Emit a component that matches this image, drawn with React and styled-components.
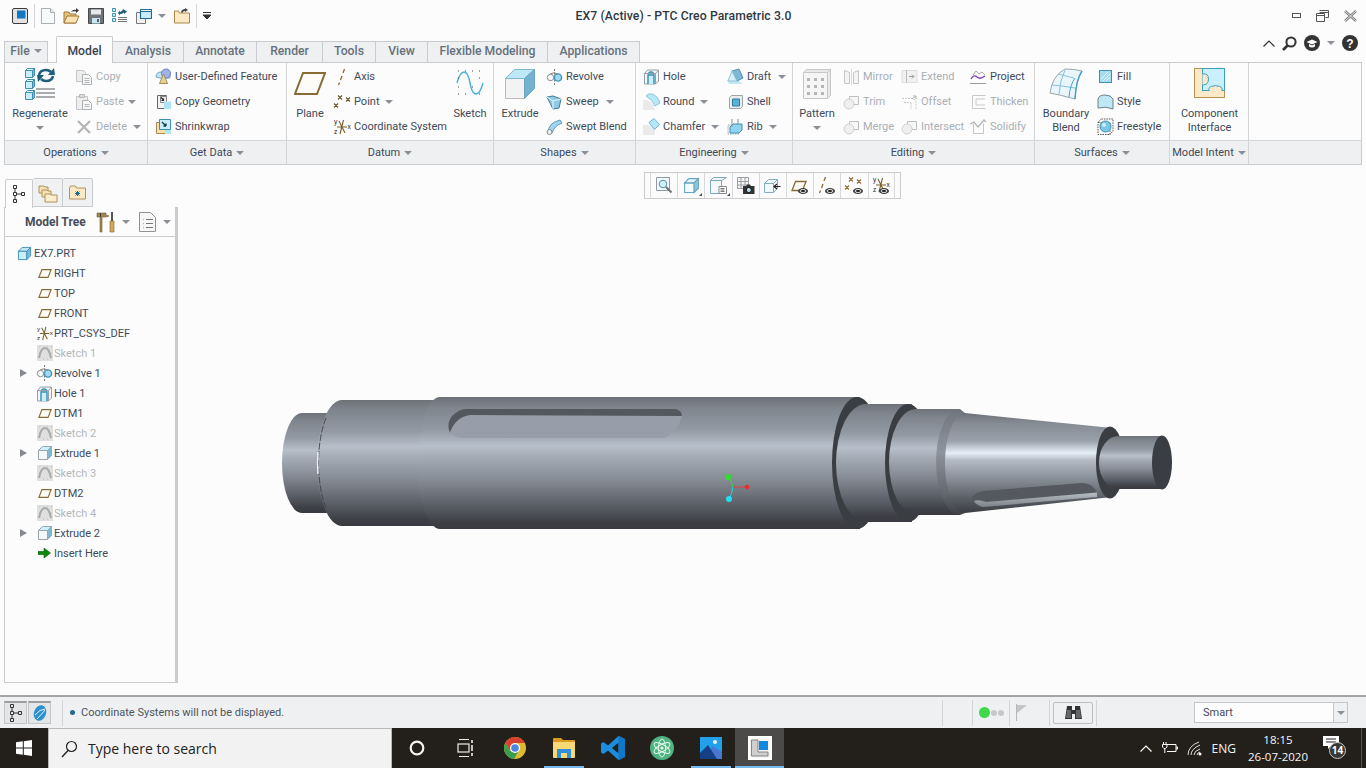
import React from 'react';
import styled, { createGlobalStyle } from 'styled-components';

const GlobalStyles = createGlobalStyle`
  html, body { margin: 0; padding: 0; background: #fcfcfc; }
  #root { width: 1366px; height: 768px; overflow: hidden; }
  * { box-sizing: border-box; }
`;

const Page = styled.div`
  width: 1366px;
  height: 768px;
  display: flex;
  flex-direction: column;
  background: #fcfcfc;
  font-family: Roboto, "Liberation Sans", sans-serif;
  font-size: 11px;
  color: #3e4a58;
  overflow: hidden;
`;

/* title bar */
const TitleBar = styled.div`
  height: 40px;
  position: relative;
  display: flex;
  align-items: center;
  padding: 0 9px 9px 12px;
`;
const QuickTools = styled.div`
  display: flex;
  align-items: center;
  gap: 8px;
`;
const QatSep = styled.div`
  width: 1px;
  height: 24px;
  background: #d4d6d8;
  margin: 0 -2px;
`;
const Title = styled.div`
  flex: 1;
  text-align: center;
  font-weight: 500;
  font-size: 12.200px;
  color: #2f3844;
  margin-left: -136px;
  letter-spacing: 0.1px;
`;
const WindowBtns = styled.div`
  display: flex;
  align-items: center;
  gap: 15px;
`;

/* tabs */
const TabRow = styled.div`
  height: 22px;
  display: flex;
  align-items: flex-end;
  padding-left: 4px;
  position: relative;
  z-index: 2;
`;
const Tab = styled.div`
  width: ${p => p.$w}px;
  height: ${p => (p.$active ? 27 : 21)}px;
  margin-right: ${p => p.$gap || 0}px;
  margin-bottom: ${p => (p.$active ? -1 : 0)}px;
  display: flex;
  align-items: center;
  justify-content: center;
  gap: 4px;
  padding-bottom: ${p => (p.$active ? 0 : 3)}px;
  padding-top: ${p => (p.$active ? 2 : 0)}px;
  background: ${p => (p.$active ? '#fcfcfc' : '#eef0f2')};
  border: 1px solid #c9cbcd;
  border-left-width: ${p => (p.$active || p.$first ? 1 : 0)}px;
  border-bottom: ${p => (p.$active ? 'none' : '0')};
  border-radius: ${p => (p.$active ? '2px 2px 0 0' : '0')};
  font-size: 12.200px;
  font-weight: 500;
  color: ${p => (p.$active ? '#3b4450' : '#66707c')};
`;
const HelpTools = styled.div`
  margin-left: auto;
  margin-right: 8px;
  align-self: flex-start;
  margin-top: -5px;
  display: flex;
  align-items: center;
  gap: 7px;
`;

/* ribbon */
const Ribbon = styled.div`
  margin: 0 4px;
  height: 103px;
  border: 1px solid #c9cbcd;
  display: flex;
`;
const Group = styled.div`
  width: ${p => p.$w}px;
  flex: ${p => (p.$fill ? 1 : 'none')};
  display: flex;
  flex-direction: column;
  border-right: ${p => (p.$fill ? 0 : '1px solid #d2d4d6')};
`;
const GroupBody = styled.div`
  height: 77px;
  display: flex;
  padding-left: ${p => p.$pl || 0}px;
  gap: ${p => p.$gap || 0}px;
`;
const GroupLabel = styled.div`
  height: 24px;
  display: flex;
  align-items: center;
  justify-content: center;
  gap: 4px;
  background: #eff0f2;
  border-top: 1px solid #d2d4d6;
  white-space: nowrap;
`;
const LargeBtn = styled.div`
  width: ${p => p.$w}px;
  flex: none;
  display: flex;
  flex-direction: column;
  align-items: center;
  padding-top: 5px;
  color: ${p => (p.$off ? '#a8aeb4' : 'inherit')};
`;
const LargeIcon = styled.div`
  height: 39px;
  display: flex;
  align-items: flex-start;
`;
const LargeLabel = styled.div`
  line-height: 14px;
  text-align: center;
  white-space: nowrap;
`;
const SmallCol = styled.div`
  width: ${p => p.$w}px;
  flex: none;
  display: flex;
  flex-direction: column;
  padding-top: 1px;
`;
const SmallBtn = styled.div`
  height: 25px;
  display: flex;
  align-items: center;
  gap: 3px;
  white-space: nowrap;
  color: ${p => (p.$off ? '#a9afb5' : 'inherit')};
`;
const Caret = styled.span`
  display: inline-block;
  width: 0;
  height: 0;
  flex: none;
  margin-left: ${p => p.$ml || 0}px;
  margin-top: ${p => p.$mt || 0}px;
  border-left: 4px solid transparent;
  border-right: 4px solid transparent;
  border-top: 4px solid ${p => p.$color || '#8b9097'};
`;

/* work area */
const Workspace = styled.div`
  flex: 1;
  display: flex;
  position: relative;
  min-height: 0;
`;
const Sidebar = styled.div`
  width: 174px;
  margin: 13px 0 12px 4px;
  display: flex;
  flex-direction: column;
`;
const SideTabs = styled.div`
  height: 29px;
  display: flex;
  align-items: flex-end;
  padding-left: 1px;
`;
const SideTab = styled.div`
  width: ${p => p.$w}px;
  height: 29px;
  display: flex;
  align-items: center;
  justify-content: center;
  border: 1px solid #c9cbcd;
  border-left-width: ${p => (p.$active ? 1 : 0)}px;
  border-bottom: ${p => (p.$active ? 0 : 1)}px solid #c9cbcd;
  border-radius: 2px 2px 0 0;
  background: ${p => (p.$active ? '#fcfcfc' : '#f0f1f3')};
  margin-bottom: ${p => (p.$active ? -1 : 0)}px;
  position: relative;
`;
const TreePanel = styled.div`
  flex: 1;
  border: 1px solid #c9cbcd;
  border-top: 0;
  border-right: 3px solid #c9cbcd;
  display: flex;
  flex-direction: column;
`;
const TreeHeader = styled.div`
  height: 30px;
  border-bottom: 1px solid #c9cbcd;
  display: flex;
  align-items: center;
  padding-left: 20px;
  font-weight: 700;
  font-size: 12px;
  color: #474d58;
`;
const HeaderIcon = styled.span`
  margin-left: ${p => p.$ml}px;
  display: flex;
`;
const TreeList = styled.div`
  padding-top: 6px;
`;
const TreeRow = styled.div`
  height: 20px;
  display: flex;
  align-items: center;
  padding-left: ${p => (p.$root ? 10 : 15)}px;
  color: ${p => (p.$off ? '#b3b7bc' : 'inherit')};
  font-size: 11px;
  white-space: nowrap;
`;
const Arrow = styled.span`
  width: 15px;
  flex: none;
  visibility: ${p => (p.$show ? 'visible' : 'hidden')};
  &::before {
    content: '';
    display: block;
    width: 0;
    height: 0;
    border-top: 4.500px solid transparent;
    border-bottom: 4.500px solid transparent;
    border-left: 7px solid #858a90;
  }
`;
const TreeIcon = styled.span`
  width: ${p => p.$w || 19}px;
  height: 16px;
  flex: none;
  display: flex;
  align-items: center;
  justify-content: center;
`;
const Canvas = styled.div`
  flex: 1;
  position: relative;
`;
const ModelArt = styled.svg`
  position: absolute;
  left: 0;
  top: 0;
  width: 1188px;
  height: 530px;
`;
const GraphicsBar = styled.div`
  position: absolute;
  left: 466px;
  top: 7px;
  height: 27px;
  display: flex;
  background: #fbfbfc;
  border: 1px solid #c9cbcd;
  padding: 0 5px;
  z-index: 1;
`;
const GraphicsBtn = styled.div`
  width: 27.200px;
  height: 25px;
  display: flex;
  align-items: ${p => (p.$pt ? 'flex-start' : 'center')};
  justify-content: ${p => (p.$pt ? 'flex-start' : 'center')};
  padding: ${p => p.$pt || 0}px 0 0 ${p => p.$pl || 0}px;
  border-left: 1px solid #d6d8da;
  position: relative;
  &:last-child { border-right: 1px solid #d6d8da; }
`;

/* status bar */
const StatusBar = styled.div`
  height: 33px;
  border-top: 2px solid #a4a4a4;
  background: #eef0f2;
  display: flex;
  align-items: center;
  padding-left: 4px;
  font-size: 11px;
  color: #4c5560;
`;
const StatusBtn = styled.div`
  width: 23px;
  height: 23px;
  margin-right: 1px;
  display: flex;
  align-items: center;
  justify-content: center;
  background: #e3e5e7;
  border: 1px solid #c4c6c8;
  border-top: 2px solid #9b9da0;
`;
const StatusSep = styled.div`
  width: 1px;
  height: 26px;
  background: #d2d4d6;
  margin: ${p => p.$m || '0'};
`;
const Bullet = styled.span`
  width: 5px;
  height: 5px;
  border-radius: 50%;
  background: #1f6a8c;
  margin: 0 6px 0 7px;
`;
const StatusRight = styled.div`
  margin-left: auto;
  display: flex;
  align-items: center;
`;
const Lamp = styled.span`
  width: ${p => p.$size}px;
  height: ${p => p.$size}px;
  border-radius: 50%;
  background: ${p => p.$color};
  margin: 0 1px 0 ${p => p.$ml || 0}px;
`;
const FindBtn = styled.div`
  width: 40px;
  height: 22px;
  margin-left: 3px;
  border: 1px solid #bcbec1;
  border-radius: 2px;
  background: #eff0f2;
  display: flex;
  align-items: center;
  justify-content: center;
`;
const SmartSelect = styled.div`
  width: 154px;
  height: 21px;
  margin: 0 18px 0 97px;
  display: flex;
  border: 1px solid #c4c6c8;
  background: #fdfdfd;
  font-size: 11px;
  color: #444c56;
`;
const SmartText = styled.div`
  flex: 1;
  padding-left: 8px;
  line-height: 20px;
`;
const SmartArrow = styled.div`
  width: 14px;
  border-left: 1px solid #c4c6c8;
  background: #eef0f2;
  display: flex;
  align-items: center;
  justify-content: center;
`;

/* windows taskbar */
const Taskbar = styled.div`
  height: 40px;
  background: #23201c;
  display: flex;
  align-items: stretch;
  font-family: "Open Sans", "Noto Sans", sans-serif;
  color: #f4f4f4;
`;
const StartBtn = styled.div`
  width: 48px;
  display: flex;
  align-items: center;
  justify-content: center;
`;
const SearchBox = styled.div`
  width: 344px;
  background: #f2f2f2;
  border: 1px solid #b8b8b8;
  border-width: 1px 1px 0 1px;
  display: flex;
  align-items: center;
  padding-left: 12px;
  gap: 10px;
  color: #222;
  font-size: 14px;
`;
const AppSlot = styled.div`
  width: 49px;
  display: flex;
  align-items: center;
  justify-content: center;
  background: ${p => (p.$active ? '#4b4a48' : 'transparent')};
  position: relative;
  &::after {
    content: '';
    display: ${p => (p.$open ? 'block' : 'none')};
    position: absolute;
    left: ${p => (p.$active ? 0 : 5)}px;
    right: ${p => (p.$active ? 0 : 4)}px;
    bottom: 0;
    height: 2px;
    background: #76b9ed;
  }
`;
const Tray = styled.div`
  margin-left: auto;
  display: flex;
  align-items: center;
  border-right: 1px solid #55524e;
  margin-right: 4px;
  padding-right: 14px;
`;
const TrayItem = styled.div`
  margin-left: ${p => p.$ml || 0}px;
  display: flex;
  align-items: center;
  font-size: ${p => p.$fs || 12}px;
`;
const Clock = styled.div`
  margin-left: 11px;
  width: 62px;
  text-align: center;
  font-size: 11.500px;
  line-height: 17px;
`;
const NoteBadge = styled.div`
  position: absolute;
  left: 6px;
  top: 6px;
  width: 17px;
  height: 17px;
  border-radius: 50%;
  background: #3a3835;
  border: 1px solid #c8c8c8;
  font-size: 10px;
  font-weight: 700;
  line-height: 15px;
  text-align: center;
  color: #fff;
`;
const NoteWrap = styled.div`
  position: relative;
  width: 24px;
  height: 24px;
  margin-left: 14px;
`;

/* ---------- icons ---------- */
const Ico = styled.svg`
  display: block;
  flex: none;
`;
const Svg = ({ w = 16, h = 16, vb, children }) => (
  <Ico width={w} height={h} viewBox={vb || `0 0 ${w} ${h}`} fill="none">{children}</Ico>
);

const BROWN = '#8a6b35';
const BLUE = '#3f93b8';

const Cube = ({ s = 16, front = '#f5f6f7', top = '#cdeefb', side = '#7db9d6', line = '#9aa6ad' }) => (
  <Svg w={s} h={s} vb="0 0 16 16">
    <path d="M1.500 5.500h9v9h-9z" fill={front} stroke={line} />
    <path d="M1.500 5.500l4-4h9l-4 4z" fill={top} stroke={line} />
    <path d="M10.500 5.500l4-4v9l-4 4z" fill={side} stroke={line} />
  </Svg>
);
const PlaneIco = ({ w = 16, h = 12, c = BROWN, sw = 1.300 }) => (
  <Svg w={w} h={h} vb="0 0 16 12"><path d="M4.500 1.500h10.500L11.500 10.500H1z" stroke={c} strokeWidth={sw} fill="#fdfcf8" /></Svg>
);
const CsysIco = ({ s = 18 }) => (
  <Svg w={s} h={s} vb="0 0 18 18">
    <path d="M4 9h10M10.500 2L7 16M6 3l6 12" stroke="#7a5f2c" strokeWidth="1.100" />
    <text x="1" y="6" fontSize="6.500" fill="#222" fontFamily="Liberation Sans">y</text>
    <text x="14.500" y="11" fontSize="6.500" fill="#222" fontFamily="Liberation Sans">x</text>
    <text x="1" y="16" fontSize="6.500" fill="#222" fontFamily="Liberation Sans">z</text>
  </Svg>
);
const SketchIco = () => (
  <Svg w={16} h={16}>
    <rect width="16" height="16" fill="#dfe0df" />
    <path d="M2 13q2-10 6-10t6 10" stroke="#a5aba9" strokeWidth="2" />
    <path d="M2 2h.5M6 2h.5M10 2h.5M14 2h.5M2 8h.5M14 8h.5M6 14h.5M10 14h.5" stroke="#999" />
  </Svg>
);
const RevolveIco = () => (
  <Svg w={18} h={16}>
    <path d="M8.500 0v16" stroke="#777" strokeDasharray="2 1.500" />
    <circle cx="4.500" cy="8.500" r="3.200" stroke="#888" fill="#fff" />
    <circle cx="12" cy="8.500" r="3.600" stroke={BLUE} strokeWidth="1.400" fill="#9fdaf2" />
    <path d="M4 5q4-2.500 8 0" stroke="#888" />
  </Svg>
);
const HoleIco = () => (
  <Svg w={17} h={17}>
    <path d="M1.500 5.500L4.500 2h11v11l-3 3h-11z" fill="#f4f5f6" stroke="#96a0a6" />
    <path d="M5 16V8Q5 4 8 4t3 4v8M5 7h6" stroke={BLUE} strokeWidth="1.500" fill="#c9eefb" />
    <path d="M12.500 16V5.500L15.500 2M12.500 5.500h-11" stroke="#96a0a6" />
  </Svg>
);
const ArrowInsert = () => (
  <Svg w={14} h={12}><path d="M0 4.500h6V1l6.500 5L6 11V7.500H0z" fill="#0d8a0d" stroke="#0a5a0a" strokeWidth=".6" /></Svg>
);
const CopyIco = () => (
  <Svg w={18} h={16}>
    <path d="M1.500 1.500h7l2 2v9h-9z" fill="#eceded" stroke="#c3c5c7" />
    <path d="M7.500 5.500h6l3 3v7h-9z" fill="#f6f6f6" stroke="#aeb1b4" />
    <path d="M9.500 9.500h5M9.500 11.500h5M9.500 13.500h5" stroke="#b5b8bb" />
  </Svg>
);
const PasteIco = () => (
  <Svg w={18} h={18}>
    <path d="M1.500 3.500h11v13h-11z" fill="#eeeeee" stroke="#c3c5c7" />
    <path d="M4.500 1.500h5v3h-5z" fill="#dadada" stroke="#b7b9bb" />
    <path d="M7.500 7.500h6l3 3v6h-9z" fill="#f6f6f6" stroke="#aeb1b4" />
    <path d="M9.500 11.500h5M9.500 13.500h5" stroke="#b5b8bb" />
  </Svg>
);
const DeleteIco = () => (
  <Svg w={16} h={16}><path d="M2 2l12 12M14 2L2 14" stroke="#b3b5b7" strokeWidth="2.200" /></Svg>
);
const RegenerateIco = () => (
  <Svg w={32} h={32}>
    <path d="M1.500 2.500h7v7h-7zM1.500 13.500h7v7h-7zM1.500 24.500h7v7h-7z" fill="#c9eefb" stroke="#3f8fb0" />
    <path d="M1.500 2.500l2-2h7l-2 2zM1.500 13.500l2-2h7l-2 2zM1.500 24.500l2-2h7l-2 2z" fill="#e9f8fd" stroke="#3f8fb0" />
    <path d="M8.500 2.500l2-2v7l-2 2zM8.500 13.500l2-2v7l-2 2zM8.500 24.500l2-2v7l-2 2z" fill="#7db9d6" stroke="#3f8fb0" />
    <path d="M12 21h19M12 25h19M12 29h19" stroke="#8e9296" strokeWidth="1.500" />
    <path d="M15 7q1-5 7-5 3 0 5 2" stroke="#1d5d7e" strokeWidth="2.600" />
    <path d="M29 8q-1 5-7 5-3 0-5-2" stroke="#1d5d7e" strokeWidth="2.600" />
    <path d="M24 7h7l-1-7zM20 7h-7l1 7z" fill="#1d5d7e" />
  </Svg>
);
const UdfIco = () => (
  <Svg w={17} h={17}>
    <path d="M1 9q0-5 5-5h9v6H5z" fill="#bfe5f5" stroke="#6fa9c5" />
    <circle cx="11" cy="5.500" r="4.500" fill="#9fb3e8" stroke="#6f80b8" />
    <path d="M8.500 6L4.500 15.500h8z" fill="#e8cf9c" stroke="#a98c52" />
  </Svg>
);
const CopyGeomIco = () => (
  <Svg w={17} h={17}>
    <path d="M2.500 2.500h9v13h-9z" fill="#f3f3f3" stroke="#666" />
    <path d="M5.500 3.500h6v6h-6z" fill="#eee" stroke="#888" />
    <path d="M6 4.500l3 3M8.500 7.500v-2M8.500 7.500h-2" stroke="#222" strokeWidth="1.200" />
    <path d="M9 8.500h7v7.500H9z" fill="#aee4f7" />
  </Svg>
);
const ShrinkIco = () => (
  <Svg w={17} h={17}>
    <path d="M1.500 4.500h10v11h-10z" fill="#f6dfae" stroke="#a88a50" />
    <path d="M4.500 1.500h11v10h-11z" fill="#c9eefb" stroke="#3f8fb0" />
    <path d="M7 4l4 4M11 8V5.500M11 8H8.500" stroke="#14394c" strokeWidth="1.300" />
    <path d="M10 12h6v4h-6z" fill="#aee4f7" />
  </Svg>
);
const AxisIco = () => (
  <Svg w={14} h={18}><path d="M9.500 1L8 5M7 8L5.500 12M4.500 14.500L3.500 17" stroke={BROWN} strokeWidth="1.300" /></Svg>
);
const PointIco = ({ eye }) => (
  <Svg w={18} h={15}>
    <path d="M5 1.500l4 4M9 1.500l-4 4M13 3.500l4 4M17 3.500l-4 4M1 9.500l4 4M5 9.500l-4 4" stroke={eye ? BROWN : '#6b5526'} strokeWidth="1.100" />
  </Svg>
);
const SketchLarge = () => (
  <Svg w={30} h={30}>
    <path d="M2 15q3-11 7-11t6 11 6 11 7-11" stroke="#45b1dc" strokeWidth="1.400" />
    <path d="M3 3h1M10 3h1M17 3h1M24 3h1M3 10h1M24 10h1M3 19h1M17 19h1M3 26h1M10 26h1M24 26h1" stroke="#444" />
  </Svg>
);
const ExtrudeLarge = () => (
  <Svg w={32} h={32}>
    <path d="M1.500 10.500h19v20h-19z" fill="#f3f3f3" stroke="#b9bcbf" />
    <path d="M1.500 10.500l9-9h20l-10 9z" fill="#bfe8f7" stroke="#7fb8d2" />
    <path d="M20.500 10.500l10-9v19l-10 10z" fill="#74b3d0" stroke="#6aa4c1" />
  </Svg>
);
const SweepIco = () => (
  <Svg w={17} h={17}>
    <path d="M1 4l6-1 8 3-2 9-6 1-3-6z" fill="#8fcbe5" stroke="#3b7c9b" />
    <path d="M1 4l6 4 8-2M7 8l0 8" stroke="#eaf7fc" />
  </Svg>
);
const SweptIco = () => (
  <Svg w={17} h={17}>
    <path d="M2 15Q2 5 14 2l2 3Q8 8 6 15z" fill="#9ed6ee" stroke="#5b9ab8" />
    <circle cx="3.500" cy="14" r="2.500" fill="#eee" stroke="#888" />
  </Svg>
);
const RoundIco = () => (
  <Svg w={17} h={17}>
    <path d="M0 7h3q7 1 9 10H0z" fill="#eaeaea" />
    <path d="M3 3q2-3 6-2 6 2 8 9l-5 3Q10 7 3 3z" fill="#b9e7f8" stroke="#8cc4dc" />
  </Svg>
);
const ChamferIco = () => (
  <Svg w={17} h={17}>
    <path d="M0 7h6l6 5v5H0z" fill="#eaeaea" />
    <path d="M6 4.500L11 .5l5.500 6-5 5z" fill="#b7e6f8" stroke="#6fb4d0" />
  </Svg>
);
const DraftIco = () => (
  <Svg w={17} h={17}>
    <path d="M0 12h10l6 4H2z" fill="#bfe8f7" />
    <path d="M5 3l7-2 4 9-6 3z" fill="#7db9d6" stroke="#4f8faf" />
    <path d="M5 3l5 10H1z" fill="#d6f0fa" stroke="#8cc4dc" />
  </Svg>
);
const ShellIco = () => (
  <Svg w={16} h={16}>
    <path d="M1.500 3.500l2-2h11v11l-2 2h-11z" fill="#ebecec" stroke="#9aa6ad" />
    <path d="M4.500 5h7v7h-7z" fill="#5cb0d8" stroke="#2f7aa0" />
  </Svg>
);
const RibIco = () => (
  <Svg w={17} h={17}>
    <path d="M1 7h11v9H1z" fill="#f1f1f1" stroke="#9aa6ad" strokeDasharray="1.500 1" />
    <path d="M3 9l3-3h9v6l-3 3H3z" fill="#8fd4f2" stroke="#3f8fb0" />
    <path d="M5 1v8M11 1v5" stroke="#8a9094" />
  </Svg>
);
const PatternLarge = () => (
  <Svg w={30} h={32}>
    <path d="M1.500 4.500h24v26h-24z" fill="#f5f5f5" stroke="#c5c7c9" />
    <path d="M1.500 4.500l3-3h24l-3 3zM25.500 4.500l3-3v26l-3 3z" fill="#e9e9e9" stroke="#c5c7c9" />
    <path d="M5 10h3v3H5zM12 10h3v3h-3zM19 10h3v3h-3zM5 17h3v3H5zM12 17h3v3h-3zM19 17h3v3h-3zM5 24h3v3H5zM12 24h3v3h-3zM19 24h3v3h-3z" fill="#b4b7ba" />
  </Svg>
);
const GreyStroke = '#c4c6c8';
const MirrorIco = () => (
  <Svg w={17} h={16}>
    <path d="M1.500 1.500l5 2v11h-5zM15.500 1.500l-5 2v11h5z" stroke={GreyStroke} fill="#f4f4f4" />
    <path d="M8.500 0v16" stroke="#d7d8d9" />
  </Svg>
);
const TrimIco = () => (
  <Svg w={17} h={17}>
    <path d="M6.500 3.500h9v8h-9z" stroke="#bcbec0" fill="#f7f7f7" />
    <circle cx="6" cy="11" r="5" stroke="#cfd1d2" fill="#efefef" />
  </Svg>
);
const ExtendIco = () => (
  <Svg w={17} h={15}>
    <path d="M1 1.500h15v12H1z" fill="#f1f1f1" stroke="#dcdddd" />
    <path d="M5.500 1.500v12" stroke="#b9bbbd" />
    <path d="M8 7.500h5M11 5.500l2 2-2 2" stroke="#9c9ea0" />
  </Svg>
);
const OffsetIco = () => (
  <Svg w={17} h={16}>
    <path d="M1 4.500h11l3 2v9" stroke="#c8cacc" strokeDasharray="2 1" />
    <path d="M3 8.500h7M10 8.500v7" stroke="#c8cacc" strokeDasharray="2 1" />
    <path d="M11 5l4-3M15 2v3M15 2h-3" stroke="#aeb0b2" />
  </Svg>
);
const ProjectIco = () => (
  <Svg w={17} h={16}>
    <path d="M0 14.500h16" stroke="#9a9c9e" />
    <path d="M1 10q3-5 6-2t8-1" stroke="#7f3fb0" strokeWidth="1.300" />
    <path d="M3 6l3-4 3 3 3-2 3 3" stroke="#a8a8a8" />
  </Svg>
);
const ThickenIco = () => (
  <Svg w={16} h={16}><path d="M1.500 1.500h13M1.500 1.500v13h13M5 5h9M5 5v6h9" stroke="#c6c8ca" /></Svg>
);
const SolidifyIco = () => (
  <Svg w={17} h={17}>
    <path d="M3.500 5.500v10h10v-10" stroke="#c4c6c8" />
    <path d="M0 6l4-2 4 5 6-7 2 2" stroke="#b3b5b7" strokeWidth="1.300" />
  </Svg>
);
const BoundaryLarge = () => (
  <Svg w={34} h={32}>
    <path d="M1 25Q3 8 16 1q10 0 17 2Q27 12 26 31 12 27 1 25z" fill="#e9f7fc" stroke="#9ea3a6" />
    <path d="M9 6q8 2 16 4M3 17q12 1 23 3M16 2q-5 10-6 24" stroke="#8bbfd6" />
    <path d="M33 3Q27 12 26 31" stroke="#49a0c5" strokeWidth="1.400" />
    <path d="M26 10Q21 17 20 29" stroke="#49a0c5" />
  </Svg>
);
const FillIco = () => (
  <Svg w={13} h={13}>
    <rect x=".5" y=".5" width="12" height="12" fill="#a7dcf3" stroke="#3f8fb0" />
    <path d="M2 9l7-7M4 11l7-7M7 11l4-4" stroke="#e7f6fc" />
  </Svg>
);
const StyleIco = () => (
  <Svg w={17} h={16}>
    <path d="M1 14V5Q2 1 8 1t8 4v10q-7-3-15-1z" fill="#bfe8f7" stroke="#6f7f88" />
  </Svg>
);
const FreestyleIco = () => (
  <Svg w={17} h={17}>
    <path d="M1 4.500h12v12H1zM1 4.500L4 1h12v12l-3 3.500" stroke="#555" strokeDasharray="1.500 1" />
    <circle cx="8.500" cy="8.500" r="5.500" fill="#7cc6e6" stroke="#3f8fb0" />
    <circle cx="7" cy="7" r="2" fill="#cfeffa" />
  </Svg>
);
const PuzzleLarge = () => (
  <Svg w={31} h={30}>
    <rect x=".5" y=".5" width="30" height="29" fill="#fbe9c9" stroke="#b8924f" />
    <rect x="8.500" y=".5" width="22" height="22" fill="#c9f0fc" stroke="#3f9fc0" />
    <path d="M8.500 6q6-1 6 5t-6 6" fill="#fbe9c9" stroke="#3f9fc0" />
    <path d="M15 23q-1-5 5-5 1-1 3 0 6 0 5 5" fill="#fbe9c9" stroke="#3f9fc0" />
  </Svg>
);
const ToolsIco = () => (
  <Svg w={19} h={22}>
    <path d="M1 2h9v2l3 1-3 1H6v15H4V6H1z" fill="#a5864f" stroke="#6f5b32" strokeWidth=".6" />
    <path d="M4 2h1v4H4z" fill="#3a3a3a" />
    <path d="M15 1h2v9h-2z" fill="#555" />
    <path d="M14 10h4v11h-4z" fill="#d2a75d" stroke="#85692f" strokeWidth=".6" />
  </Svg>
);
const ListIco = () => (
  <Svg w={17} h={20}>
    <path d="M.5.500h11l5 5v14H.5z" fill="#f7f7f7" stroke="#8f9396" />
    <path d="M4 7.500h.5M4 11.500h.5M4 15.500h.5" stroke="#4d8fb0" strokeWidth="1.600" />
    <path d="M7 7.500h7M7 11.500h7M7 15.500h7" stroke="#71767a" />
  </Svg>
);
const TreeTabIco = () => (
  <Svg w={14} h={20}>
    <path d="M1.500 1.500h3v3h-3zM1.500 8.500h3v3h-3zM1.500 15.500h3v3h-3zM9.500 8.500h3v3h-3z" stroke="#333" />
    <path d="M3 5v3M3 12v3M5 10h4" stroke="#333" />
  </Svg>
);
const FoldersIco = () => (
  <Svg w={20} h={20}>
    <path d="M1 3h5l1 1h3v6H1z" fill="#f6e2b6" stroke="#b0925a" />
    <path d="M4 7h5l1 1h3v6H4z" fill="#f6e2b6" stroke="#b0925a" />
    <path d="M7 11h5l1 1h6v7H7z" fill="#fbeecf" stroke="#b0925a" />
  </Svg>
);
const FolderStarIco = () => (
  <Svg w={17} h={15}>
    <path d="M.5 3l1-2h5l1 2h9v11H.5z" fill="#f9e9c5" stroke="#b0925a" />
    <path d="M8.500 6v5M6 8.500h5M6.500 6.500l4 4M10.500 6.500l-4 4" stroke="#1b6d8f" />
  </Svg>
);

/* quick access */
const WinIco = () => (
  <Svg w={16} h={16}>
    <rect x=".5" y=".5" width="15" height="15" rx="1.500" fill="#e4e4e4" stroke="#3c3c3c" />
    <path d="M5 2.500h8.500v8H5z" fill="#0f77c4" />
  </Svg>
);
const NewIco = () => (
  <Svg w={14} h={16}><path d="M.5.500h9l4 4v11H.5z" fill="#f8fbfc" stroke="#a9afb3" /><path d="M9.500.500v4h4" stroke="#a9afb3" fill="#e4e8ea" /></Svg>
);
const OpenIco = () => (
  <Svg w={17} h={16}>
    <path d="M1 15V4h5l1 2h6v9z" fill="#e8c17f" stroke="#9f7a36" />
    <path d="M1 15l3-7h12l-3 7z" fill="#f9e3b4" stroke="#9f7a36" />
    <path d="M8 4q2-3 5-2V0l3 2.500L13 5V3.500q-3-.5-5 .5z" fill="#3a3a3a" />
  </Svg>
);
const SaveIco = () => (
  <Svg w={16} h={16}>
    <path d="M.5.500h15v15H.5z" fill="#6f7478" stroke="#45494c" />
    <path d="M3 1.500h10v5H3z" fill="#e6e8ea" />
    <path d="M4 10h8v5.500H4z" fill="#c5e6f2" />
    <path d="M9 11h2v3H9z" fill="#5b6165" />
  </Svg>
);
const RegenSmall = () => (
  <Svg w={16} h={16}>
    <path d="M.5.500h3v3h-3zM.5 5.500h3v3h-3zM.5 10.500h3v3h-3z" fill="#c9eefb" stroke="#3f8fb0" />
    <path d="M6 9.500h9M6 11.500h9M6 13.500h9" stroke="#777" />
    <path d="M6 5l2-2.500V4q3-1 3-3l1.500 1L15 3.500 12 6V4.500Q10 6 8 6v1.500z" fill="#1d5d7e" />
  </Svg>
);
const WindowsIco = () => (
  <Svg w={16} h={16}>
    <path d="M.5 4.500h9v11h-9z" fill="#f1f1f1" stroke="#777" />
    <path d="M4.500 1.500h11v9h-11z" fill="#c9eefb" stroke="#1d6d92" strokeWidth="1.200" />
    <path d="M4.500 1.500h11v2h-11z" fill="#f0fafd" stroke="#1d6d92" />
  </Svg>
);
const CloseFolderIco = () => (
  <Svg w={16} h={16}>
    <path d="M.5 15V3h4l1 2h10v10z" fill="#fbe9c6" stroke="#a98845" />
    <path d="M7 4q1-3 4-3V0l3 2-3 2V3Q9 3 8 5z" fill="#444" />
  </Svg>
);
const DropIco = () => (
  <Svg w={8} h={8}><path d="M0 .500h8M0 3l4 4 4-4z" stroke="#333" fill="#333" /></Svg>
);

/* toolbar in graphics area */
const Corner = styled.span`
  position: absolute;
  right: 2px;
  bottom: 2px;
  border-left: 3px solid transparent;
  border-bottom: 3px solid #3e4a58;
`;
const ZoomFitIco = () => (
  <Svg w={17} h={17}>
    <path d="M.5.500h13v13H.5z" fill="#f3f8fa" stroke="#8f9ba1" />
    <circle cx="7" cy="7" r="3.800" fill="#d5eef9" stroke="#4f8fae" />
    <path d="M10 10l5.500 5.500" stroke="#6f7377" strokeWidth="2" />
  </Svg>
);
const ViewsIco = () => (
  <Svg w={17} h={17}>
    <path d="M.5 3.500h11v13H.5zM.5 3.500l3-3h13l-5 3z" fill="#f3f8fa" stroke="#7ba8bd" />
    <path d="M9 9.500h7.500v7H9z" fill="#fff" stroke="#888" />
    <path d="M10.500 11.500h4M10.500 13h4M10.500 14.500h4" stroke="#777" />
  </Svg>
);
const CameraIco = () => (
  <Svg w={18} h={18}>
    <path d="M.5.500h11v11H.5zM.5 4.500h11M.5 8h11M4 .500v11M8 .500v11" stroke="#9a9ea2" fill="#f4f4f4" />
    <path d="M6 9h3l1-1.500h3L14 9h3.500v8H6z" fill="#333" />
    <circle cx="11.800" cy="13" r="2.600" fill="#bcd9e6" stroke="#111" />
  </Svg>
);
const ArrowCubeIco = () => (
  <Svg w={17} h={15}>
    <path d="M.5 5.500h9v9h-9zM.5 5.500l4-4h9l-4 4zM9.500 5.500l4-4v9l-4 4z" fill="#eff9fd" stroke="#84aec1" />
    <path d="M16.500 8.500H10M13 6l-3 2.500 3 2.500" stroke="#222" strokeWidth="1.200" />
  </Svg>
);
const EyeMark = styled.span`
  position: absolute;
  right: 5px;
  bottom: 4px;
  width: 10px;
  height: 6px;
  border-radius: 50%;
  background: radial-gradient(ellipse, #2a2a2a 22%, #c8c8c8 30%, #c8c8c8 42%, #3a3a3a 52%);
`;

/* taskbar */
const StartIco = () => (
  <Svg w={16} h={16}><path d="M0 2.300l6.800-1v6.300H0zM7.800 1.200L16 0v7.600H7.800zM0 8.500h6.800v6.300L0 13.800zM7.800 8.500H16V16l-8.200-1.200z" fill="#fff" /></Svg>
);
const SearchIco = () => (
  <Svg w={17} h={18}><circle cx="10.500" cy="6.500" r="5" stroke="#222" strokeWidth="1.200" /><path d="M7 10.500L1 17" stroke="#222" strokeWidth="1.400" /></Svg>
);
const CortanaIco = () => (
  <Svg w={16} h={16}><circle cx="8" cy="8" r="6.300" stroke="#f4f4f4" strokeWidth="2.200" /></Svg>
);
const TaskViewIco = () => (
  <Svg w={17} h={18}>
    <path d="M2 .500h10M2 17.500h10" stroke="#eee" strokeWidth="1.200" />
    <rect x="1" y="5" width="11" height="8" stroke="#eee" strokeWidth="1.200" />
    <path d="M15 1v3M15 6v6M15 14v3" stroke="#eee" strokeWidth="1.600" />
  </Svg>
);
const ChromeIco = () => (
  <Svg w={24} h={24}>
    <circle cx="12" cy="12" r="11" fill="#e1bb2f" />
    <path d="M12 1A11 11 0 0 0 2.300 6.800L7 15 12 7h9.800A11 11 0 0 0 12 1z" fill="#d8402f" />
    <path d="M2.300 6.800A11 11 0 0 0 11 23l5-8.500L7 15z" fill="#3a9f4c" />
    <circle cx="12" cy="12" r="5" fill="#fff" />
    <circle cx="12" cy="12" r="3.800" fill="#4a87e5" />
  </Svg>
);
const FilesIco = () => (
  <Svg w={22} h={20}>
    <path d="M0 1q0-1 1-1h7l2 2h11q1 0 1 1v2H0z" fill="#d99a20" />
    <path d="M0 4h22v15q0 1-1 1H1q-1 0-1-1z" fill="#f8d775" />
    <path d="M4 11h14v9h-4v-5H8v5H4z" fill="#2f8fd8" />
  </Svg>
);
const VsCodeIco = () => (
  <Svg w={24} h={24}>
    <path d="M17.500 0L24 3v18l-6.500 3L7 14.500 2.500 18 0 16.500V7.500L2.500 6 7 9.500zM17.500 6.500L11 12l6.500 5.500z" fill="#1c8ee0" />
    <path d="M17.500 0L24 3v18l-6.500 3z" fill="#0f78c8" />
  </Svg>
);
const AtomIco = () => (
  <Svg w={24} h={24}>
    <circle cx="12" cy="12" r="12" fill="#4fb482" />
    <ellipse cx="12" cy="12" rx="3.500" ry="9" stroke="#e4f5ea" />
    <ellipse cx="12" cy="12" rx="3.500" ry="9" stroke="#e4f5ea" transform="rotate(60 12 12)" />
    <ellipse cx="12" cy="12" rx="3.500" ry="9" stroke="#e4f5ea" transform="rotate(-60 12 12)" />
    <circle cx="12" cy="12" r="1.600" fill="#e4f5ea" />
  </Svg>
);
const PhotosIco = () => (
  <Svg w={22} h={22}>
    <rect width="22" height="22" fill="#22a0ea" />
    <circle cx="15" cy="5" r="2" fill="#e6f4fd" />
    <path d="M12 9l10 6v7H8z" fill="#4a76d0" />
    <path d="M0 22v-6l8-8 9 14z" fill="#153f86" />
  </Svg>
);
const CreoTaskIco = () => (
  <Svg w={24} h={24}>
    <rect x="1" y="1" width="22" height="22" fill="#f4f4f4" stroke="#fff" strokeWidth="2" />
    <path d="M3.500 4h6.500v12h10v4H3.500z" fill="#cfcfcf" stroke="#6f6f6f" strokeWidth=".8" />
    <rect x="11" y="5" width="9" height="9" fill="#0f8ae0" />
  </Svg>
);
const PlugIco = () => (
  <Svg w={16} h={12}>
    <path d="M1.500 0v2.500M4 0v2.500M.5 2.500h4.500v2.500L3.500 6.500H2L.5 5zM2.800 6.500V11" stroke="#fff" />
    <path d="M5 2.500h9v7H5M14 5h1.500v2H14" stroke="#fff" />
  </Svg>
);
const WifiIco = () => (
  <Svg w={17} h={16}>
    <path d="M1 15Q1 6 12 2M4 15q0-6 9-10M7 15q0-4 6-6M10 15q0-2 3-3" stroke="#ddd" />
    <circle cx="13" cy="14" r="1.500" fill="#fff" />
  </Svg>
);
const NoteIco = () => (
  <Svg w={16} h={13}><path d="M0 0h16v10H8l-3 3v-3H0z" fill="#fff" /><path d="M3 3h10M3 6h10" stroke="#23201c" /></Svg>
);
const ChevronUp = ({ c = '#fff', w = 12, h = 7, sw = 1.200 }) => (
  <Svg w={w} h={h} vb="0 0 12 7"><path d="M.5 6.500L6 1l5.500 5.500" stroke={c} strokeWidth={sw} /></Svg>
);

/* ---------- shaft ---------- */
const Seg = ({ cx, rx, top, bottom, end, fill = 'url(#steel)' }) => {
  const ry = (bottom - top) / 2;
  return <path d={`M${cx} ${top}L${end} ${top}L${end} ${bottom}L${cx} ${bottom}A${rx} ${ry} 0 0 1 ${cx} ${top}Z`} fill={fill} />;
};
const Shaft = () => (
  <ModelArt viewBox="178 165 1188 530">
    <defs>
      <linearGradient id="steel" x1="0" y1="0" x2="0" y2="1">
        <stop offset="0" stopColor="#6d7279" />
        <stop offset="0.08" stopColor="#7f858d" />
        <stop offset="0.25" stopColor="#939aa4" />
        <stop offset="0.37" stopColor="#b7bfca" />
        <stop offset="0.45" stopColor="#a5acb6" />
        <stop offset="0.62" stopColor="#878d96" />
        <stop offset="0.82" stopColor="#5b5f67" />
        <stop offset="0.95" stopColor="#3d3f45" />
        <stop offset="1" stopColor="#393b40" />
      </linearGradient>
      <linearGradient id="cone" x1="0" y1="0" x2="0" y2="1">
        <stop offset="0" stopColor="#6d7279" />
        <stop offset="0.1" stopColor="#858b93" />
        <stop offset="0.28" stopColor="#9aa1ab" />
        <stop offset="0.4" stopColor="#e6eef7" />
        <stop offset="0.47" stopColor="#b5bcc6" />
        <stop offset="0.65" stopColor="#8a9099" />
        <stop offset="0.85" stopColor="#5b5f67" />
        <stop offset="1" stopColor="#3b3d42" />
      </linearGradient>
      <linearGradient id="band" x1="0" y1="0" x2="0" y2="1">
        <stop offset="0" stopColor="#70757c" />
        <stop offset="0.4" stopColor="#8e949d" />
        <stop offset="0.8" stopColor="#63676e" />
        <stop offset="1" stopColor="#3e4046" />
      </linearGradient>
      <linearGradient id="keyLip" x1="0" y1="0" x2="0" y2="1">
        <stop offset="0" stopColor="#b7bdc6" />
        <stop offset="1" stopColor="#7d8188" />
      </linearGradient>
    </defs>

    <Seg cx={302} rx={20} top={413} bottom={513} end={345} />
    <Seg cx={342} rx={25} top={400} bottom={526} end={445} />
    <path d="M326 418A25 63 0 0 0 326 508" stroke="#3d4046" strokeWidth="0.9" strokeDasharray="7 1.500" fill="none" />
    <path d="M318 452A25 63 0 0 0 318 474" stroke="#eef2f6" strokeWidth="1.500" fill="none" />
    <Seg cx={440} rx={22} top={397} bottom={529} end={860} />

    <path d="M465 409L676 409Q682 411 682 416L470 416Q458 418 450 433Q446 424 452 416Q458 410 465 409Z" fill="#53575e" />
    <path d="M470 415L682 416Q678 432 664 438L462 438Q451 436 450 432Q456 417 470 415Z" fill="#989ea9" />

    <ellipse cx={857} cy={463} rx={25} ry={66} fill="#3a3d42" />
    <Seg cx={866} rx={30} top={404} bottom={522} end={912} />
    <ellipse cx={908} cy={463} rx={23} ry={59} fill="#3a3d42" />
    <Seg cx={916} rx={27} top={409} bottom={515} end={960} />
    <path d="M960 409L965 413L965 513L960 515A24 53 0 0 1 960 409Z" fill="url(#band)" />
    <path d="M965 413L1112 428L1112 497L965 513A20 50 0 0 1 965 413Z" fill="url(#cone)" />
    <ellipse cx={1110} cy={462.500} rx={14} ry={36} fill="#3a3d42" />
    <path d="M972 498Q974 493 983 491L1082 483Q1093 483 1097 493L1097 497L983 507Q974 505 972 498Z" fill="#55595f" />
    <path d="M974 501Q978 499 986 502L1097 492.500L1097 497L983 507Q976 505 974 501Z" fill="url(#keyLip)" />
    <Seg cx={1118} rx={19} top={436} bottom={489} end={1163} />
    <ellipse cx={1162} cy={462.500} rx={10} ry={27} fill="#3a3d42" />

    <path d="M733 487Q732 481 728 477" stroke="#3fd23f" strokeWidth="1" fill="none" />
    <path d="M733 487Q732 494 729 499" stroke="#22d6e0" strokeWidth="1" fill="none" />
    <path d="M733 487H747" stroke="#e04040" strokeWidth="1" />
    <circle cx={728} cy={477} r={3} fill="#2be02b" />
    <circle cx={729} cy={499} r={3} fill="#20e3ee" />
    <circle cx={747} cy={487} r={2.300} fill="#e92e2e" />
  </ModelArt>
);

const tabs = [
  ['Analysis', 71], ['Annotate', 73], ['Render', 66], ['Tools', 53],
  ['View', 52], ['Flexible Modeling', 120], ['Applications', 92],
];

const tree = [
  { label: 'RIGHT', icon: <PlaneIco w={14} h={11} /> },
  { label: 'TOP', icon: <PlaneIco w={14} h={11} /> },
  { label: 'FRONT', icon: <PlaneIco w={14} h={11} /> },
  { label: 'PRT_CSYS_DEF', icon: <CsysIco s={17} /> },
  { label: 'Sketch 1', icon: <SketchIco />, off: true },
  { label: 'Revolve 1', icon: <RevolveIco />, arrow: true },
  { label: 'Hole 1', icon: <HoleIco /> },
  { label: 'DTM1', icon: <PlaneIco w={14} h={11} /> },
  { label: 'Sketch 2', icon: <SketchIco />, off: true },
  { label: 'Extrude 1', icon: <Cube />, arrow: true },
  { label: 'Sketch 3', icon: <SketchIco />, off: true },
  { label: 'DTM2', icon: <PlaneIco w={14} h={11} /> },
  { label: 'Sketch 4', icon: <SketchIco />, off: true },
  { label: 'Extrude 2', icon: <Cube />, arrow: true },
  { label: 'Insert Here', icon: <ArrowInsert /> },
];

const Small = ({ icon, label, off, caret, ml }) => (
  <SmallBtn $off={off}>
    {icon}
    <span>{label}</span>
    {caret && <Caret $ml={ml || 3} />}
  </SmallBtn>
);
const IconBox = styled.span`
  width: ${p => p.$w}px;
  flex: none;
  display: flex;
  justify-content: center;
`;
const Boxed = ({ w = 17, children }) => <IconBox $w={w}>{children}</IconBox>;

const App = () => (
  <Page>
    <GlobalStyles />
    <TitleBar>
      <QuickTools>
        <WinIco />
        <QatSep />
        <NewIco />
        <OpenIco />
        <SaveIco />
        <RegenSmall />
        <WindowsIco />
        <Caret $ml={-2} />
        <CloseFolderIco />
        <QatSep />
        <DropIco />
      </QuickTools>
      <Title>EX7 (Active) - PTC Creo Parametric 3.0</Title>
      <WindowBtns>
        <Svg w={9} h={5}><rect x=".5" y=".5" width="8" height="4" stroke="#555" /></Svg>
        <Svg w={13} h={12}><path d="M3.500.5h9v7h-3M.5 3.500h8v8h-8zM.5 5.500h8M3.500 2.500h9" stroke="#555" /></Svg>
        <Svg w={13} h={12}><path d="M1 1l11 10M12 1L1 11" stroke="#777" strokeWidth="2.400" /><path d="M1 1l11 10M12 1L1 11" stroke="#fff" strokeWidth=".8" /></Svg>
      </WindowBtns>
    </TitleBar>

    <TabRow>
      <Tab $w={44} $gap={8} $first>File <Caret $mt={1} /></Tab>
      <Tab $w={57} $active>Model</Tab>
      {tabs.map(([name, w]) => <Tab key={name} $w={w}>{name}</Tab>)}
      <HelpTools>
        <ChevronUp c="#333" />
        <Svg w={15} h={15}><circle cx="9" cy="6" r="4.600" stroke="#333" strokeWidth="2" /><path d="M5.500 9.500L1 14" stroke="#333" strokeWidth="2.600" /></Svg>
        <Svg w={16} h={16} vb="0 0 16 16"><circle cx="8" cy="8" r="8" fill="#333" /><path d="M2.500 7L8 4.500 13.500 7 8 9.500z" fill="#fff" /><path d="M5 9v2.500q3 2 6 0V9L8 10.500z" fill="#fff" /></Svg>
        <Caret />
        <Svg w={16} h={16}><circle cx="8" cy="8" r="8" fill="#333" /><text x="8" y="12.500" textAnchor="middle" fontSize="12" fontWeight="700" fill="#fff" fontFamily="Liberation Sans">?</text></Svg>
      </HelpTools>
    </TabRow>

    <Ribbon>
      <Group $w={143}>
        <GroupBody>
          <LargeBtn $w={70}>
            <LargeIcon><RegenerateIco /></LargeIcon>
            <LargeLabel>Regenerate</LargeLabel>
            <Caret $mt={5} />
          </LargeBtn>
          <SmallCol $w={70}>
            <Small off label="Copy" icon={<Boxed w={18}><CopyIco /></Boxed>} />
            <Small off label="Paste" caret ml={1} icon={<Boxed w={18}><PasteIco /></Boxed>} />
            <Small off label="Delete" caret ml={3} icon={<Boxed w={18}><DeleteIco /></Boxed>} />
          </SmallCol>
        </GroupBody>
        <GroupLabel>Operations <Caret /></GroupLabel>
      </Group>

      <Group $w={139}>
        <GroupBody $pl={7}>
          <SmallCol $w={130}>
            <Small label="User-Defined Feature" icon={<UdfIco />} />
            <Small label="Copy Geometry" icon={<CopyGeomIco />} />
            <Small label="Shrinkwrap" icon={<ShrinkIco />} />
          </SmallCol>
        </GroupBody>
        <GroupLabel>Get Data <Caret /></GroupLabel>
      </Group>

      <Group $w={207}>
        <GroupBody>
          <LargeBtn $w={46}>
            <LargeIcon><Svg w={32} h={27} vb="0 0 32 27"><path d="M9 5h22L23 26H1z" stroke={BROWN} strokeWidth="2" fill="#fdfcf8" /></Svg></LargeIcon>
            <LargeLabel>Plane</LargeLabel>
          </LargeBtn>
          <SmallCol $w={114}>
            <Small label="Axis" icon={<Boxed w={18}><AxisIco /></Boxed>} />
            <Small label="Point" caret ml={2} icon={<Boxed w={18}><PointIco /></Boxed>} />
            <Small label="Coordinate System" icon={<Boxed w={18}><CsysIco /></Boxed>} />
          </SmallCol>
          <LargeBtn $w={46}>
            <LargeIcon><SketchLarge /></LargeIcon>
            <LargeLabel>Sketch</LargeLabel>
          </LargeBtn>
        </GroupBody>
        <GroupLabel>Datum <Caret /></GroupLabel>
      </Group>

      <Group $w={142}>
        <GroupBody $pl={3} $gap={3}>
          <LargeBtn $w={46}>
            <LargeIcon><ExtrudeLarge /></LargeIcon>
            <LargeLabel>Extrude</LargeLabel>
          </LargeBtn>
          <SmallCol $w={86}>
            <Small label="Revolve" icon={<Boxed w={17}><RevolveIco /></Boxed>} />
            <Small label="Sweep" caret ml={4} icon={<SweepIco />} />
            <Small label="Swept Blend" icon={<SweptIco />} />
          </SmallCol>
        </GroupBody>
        <GroupLabel>Shapes <Caret /></GroupLabel>
      </Group>

      <Group $w={157}>
        <GroupBody $pl={7}>
          <SmallCol $w={84}>
            <Small label="Hole" icon={<HoleIco />} />
            <Small label="Round" caret ml={3} icon={<RoundIco />} />
            <Small label="Chamfer" caret ml={3} icon={<ChamferIco />} />
          </SmallCol>
          <SmallCol $w={64}>
            <Small label="Draft" icon={<DraftIco />} caret ml={4} />
            <Small label="Shell" icon={<Boxed><ShellIco /></Boxed>} />
            <Small label="Rib" icon={<RibIco />} caret ml={3} />
          </SmallCol>
        </GroupBody>
        <GroupLabel>Engineering <Caret /></GroupLabel>
      </Group>

      <Group $w={242}>
        <GroupBody $pl={2} $gap={4}>
          <LargeBtn $w={44}>
            <LargeIcon><PatternLarge /></LargeIcon>
            <LargeLabel>Pattern</LargeLabel>
            <Caret $mt={5} />
          </LargeBtn>
          <SmallCol $w={54}>
            <Small off label="Mirror" icon={<MirrorIco />} />
            <Small off label="Trim" icon={<TrimIco />} />
            <Small off label="Merge" icon={<TrimIco />} />
          </SmallCol>
          <SmallCol $w={65}>
            <Small off label="Extend" icon={<ExtendIco />} />
            <Small off label="Offset" icon={<OffsetIco />} />
            <Small off label="Intersect" icon={<TrimIco />} />
          </SmallCol>
          <SmallCol $w={58}>
            <Small label="Project" icon={<ProjectIco />} />
            <Small off label="Thicken" icon={<Boxed><ThickenIco /></Boxed>} />
            <Small off label="Solidify" icon={<SolidifyIco />} />
          </SmallCol>
        </GroupBody>
        <GroupLabel>Editing <Caret /></GroupLabel>
      </Group>

      <Group $w={135}>
        <GroupBody $pl={2} $gap={2}>
          <LargeBtn $w={58}>
            <LargeIcon><BoundaryLarge /></LargeIcon>
            <LargeLabel>Boundary<br />Blend</LargeLabel>
          </LargeBtn>
          <SmallCol $w={70}>
            <Small label="Fill" icon={<Boxed><FillIco /></Boxed>} />
            <Small label="Style" icon={<StyleIco />} />
            <Small label="Freestyle" icon={<FreestyleIco />} />
          </SmallCol>
        </GroupBody>
        <GroupLabel>Surfaces <Caret /></GroupLabel>
      </Group>

      <Group $w={79}>
        <GroupBody>
          <LargeBtn $w={79}>
            <LargeIcon><PuzzleLarge /></LargeIcon>
            <LargeLabel>Component<br />Interface</LargeLabel>
          </LargeBtn>
        </GroupBody>
        <GroupLabel>Model Intent <Caret /></GroupLabel>
      </Group>

      <Group $fill>
        <GroupBody />
        <GroupLabel />
      </Group>
    </Ribbon>

    <Workspace>
      <Sidebar>
        <SideTabs>
          <SideTab $w={28} $active><TreeTabIco /></SideTab>
          <SideTab $w={30}><FoldersIco /></SideTab>
          <SideTab $w={30}><FolderStarIco /></SideTab>
        </SideTabs>
        <TreePanel>
          <TreeHeader>
            Model Tree
            <HeaderIcon $ml={10}><ToolsIco /></HeaderIcon>
            <Caret $ml={7} />
            <HeaderIcon $ml={9}><ListIco /></HeaderIcon>
            <Caret $ml={7} />
          </TreeHeader>
          <TreeList>
            <TreeRow $root>
              <TreeIcon $w={19}><Cube s={15} top="#bfe8f7" front="#c9eefb" line="#3f8fb0" side="#7db9d6" /></TreeIcon>
              EX7.PRT
            </TreeRow>
            {tree.map(row => (
              <TreeRow key={row.label} $off={row.off}>
                <Arrow $show={row.arrow} />
                <TreeIcon>{row.icon}</TreeIcon>
                {row.label}
              </TreeRow>
            ))}
          </TreeList>
        </TreePanel>
      </Sidebar>
      <Canvas>
        <Shaft />
        <GraphicsBar>
          <GraphicsBtn><ZoomFitIco /></GraphicsBtn>
          <GraphicsBtn><Cube s={17} front="#f2fafd" top="#e4f5fb" side="#8ec6de" line="#6aa4c1" /><Corner /></GraphicsBtn>
          <GraphicsBtn><ViewsIco /><Corner /></GraphicsBtn>
          <GraphicsBtn><CameraIco /></GraphicsBtn>
          <GraphicsBtn><ArrowCubeIco /></GraphicsBtn>
          <GraphicsBtn $pt={7} $pl={4}><PlaneIco w={16} h={12} /><EyeMark /></GraphicsBtn>
          <GraphicsBtn $pt={3} $pl={2}><AxisIco /><EyeMark /></GraphicsBtn>
          <GraphicsBtn $pt={3} $pl={3}><PointIco eye /><EyeMark /></GraphicsBtn>
          <GraphicsBtn $pt={3} $pl={3}><CsysIco /><EyeMark /></GraphicsBtn>
        </GraphicsBar>
      </Canvas>
    </Workspace>

    <StatusBar>
      <StatusBtn><TreeTabIco /></StatusBtn>
      <StatusBtn>
        <Svg w={16} h={18}><ellipse cx="8" cy="9" rx="6" ry="8" fill="#2c8fd0" transform="rotate(20 8 9)" /><path d="M3 11q5-6 10-6M5 15q4-4 8-9" stroke="#e6f4fb" /></Svg>
      </StatusBtn>
      <StatusSep $m="0 0 0 10px" />
      <Bullet />
      <span>Coordinate Systems will not be displayed.</span>
      <StatusRight>
        <StatusSep />
        <StatusSep $m="0 0 0 29px" />
        <Lamp $size={11} $color="#3fd84a" $ml={6} />
        <Lamp $size={6} $color="#c6c8ca" />
        <Lamp $size={6} $color="#c6c8ca" />
        <StatusSep $m="0 5px 0 4px" />
        <Svg w={12} h={17} vb="0 0 12 17"><path d="M1.500 0v17" stroke="#b5b7b9" /><path d="M2 1h10L6 6 2 9z" fill="#c3c5c7" /></Svg>
        <StatusSep $m="0 0 0 22px" />
        <FindBtn>
          <Svg w={17} h={15}><path d="M2 1h5v4h3V1h5l2 13H10V9H7v5H0z" fill="#333" /><path d="M2 5h4v8H1zM11 5h4l1 8h-5z" fill="#666" /></Svg>
        </FindBtn>
        <StatusSep $m="0 0 0 3px" />
        <SmartSelect>
          <SmartText>Smart</SmartText>
          <SmartArrow><Caret /></SmartArrow>
        </SmartSelect>
      </StatusRight>
    </StatusBar>

    <Taskbar>
      <StartBtn><StartIco /></StartBtn>
      <SearchBox><SearchIco />Type here to search</SearchBox>
      <AppSlot><CortanaIco /></AppSlot>
      <AppSlot><TaskViewIco /></AppSlot>
      <AppSlot><ChromeIco /></AppSlot>
      <AppSlot $open><FilesIco /></AppSlot>
      <AppSlot><VsCodeIco /></AppSlot>
      <AppSlot><AtomIco /></AppSlot>
      <AppSlot $open><PhotosIco /></AppSlot>
      <AppSlot $open $active><CreoTaskIco /></AppSlot>
      <Tray>
        <ChevronUp />
        <TrayItem $ml={10}><PlugIco /></TrayItem>
        <TrayItem $ml={9}><WifiIco /></TrayItem>
        <TrayItem $ml={8} $fs={12}>ENG</TrayItem>
        <Clock>18:15<br />26-07-2020</Clock>
        <NoteWrap>
          <NoteIco />
          <NoteBadge>14</NoteBadge>
        </NoteWrap>
      </Tray>
    </Taskbar>
  </Page>
);

export default App;
